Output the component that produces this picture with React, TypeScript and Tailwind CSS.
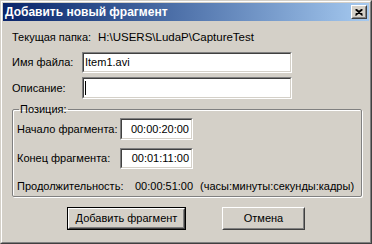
import React from "react";

function Sunken({ className, children }: { className: string; children?: React.ReactNode }) {
  return (
    <div className={`border border-t-[#808080] border-l-[#808080] border-r-white border-b-white ${className}`}>
      <div className="h-full border border-t-[#404040] border-l-[#404040] border-r-[#d4d0c8] border-b-[#d4d0c8] bg-white flex items-center">
        {children}
      </div>
    </div>
  );
}

function Button({ label, width, isDefault }: { label: string; width: string; isDefault?: boolean }) {
  const inner = (
    <div className="h-full border border-t-white border-l-white border-r-[#404040] border-b-[#404040]">
      <div className="h-full border border-t-[#d4d0c8] border-l-[#d4d0c8] border-r-[#808080] border-b-[#808080] flex items-center justify-center">
        {label}
      </div>
    </div>
  );
  return (
    <div className={`${width} h-[23px] ${isDefault ? "border border-black" : ""}`}>
      {inner}
    </div>
  );
}

export default function App() {
  return (
    <div className="w-[372px] h-[244px] bg-[#d4d0c8] border border-t-[#d4d0c8] border-l-[#d4d0c8] border-r-[#404040] border-b-[#404040] font-['Liberation_Sans',Arial,sans-serif] text-[11px] text-black">
      <div className="h-full border border-t-white border-l-white border-r-[#808080] border-b-[#808080] p-px flex flex-col">
        <div className="h-[18px] flex items-center bg-gradient-to-r from-[#0a246a] to-[#a6caf0] pl-[2px] pr-[2px]">
          <span className="text-white font-bold text-[12px] leading-none">Добавить новый фрагмент</span>
          <div className="ml-auto w-[16px] h-[14px] border border-t-white border-l-white border-r-[#404040] border-b-[#404040]">
            <div className="h-full border border-t-[#d4d0c8] border-l-[#d4d0c8] border-r-[#808080] border-b-[#808080] bg-[#d4d0c8] flex items-center justify-center">
              <svg width="8" height="7" viewBox="0 0 8 7">
                <path d="M0.5 0.5 L7.5 6.5 M1.5 0.5 L7.5 5.5 M7.5 0.5 L0.5 6.5 M6.5 0.5 L0.5 5.5" stroke="#000" strokeWidth="1.2" fill="none" />
              </svg>
            </div>
          </div>
        </div>

        <div className="pl-[9px] flex flex-col">
          <div className="mt-[9px] h-[14px] leading-[14px] flex items-baseline whitespace-nowrap">
            <span className="w-[86px] shrink-0">Текущая папка:</span>
            <span className="text-[11.5px]">H:\USERS\LudaP\CaptureTest</span>
          </div>

          <div className="mt-[8px] flex items-center">
            <span className="w-[70px]">Имя файла:</span>
            <Sunken className="w-[210px] h-[21px]">
              <span className="pl-[1px]">Item1.avi</span>
            </Sunken>
          </div>

          <div className="mt-[4px] flex items-center">
            <span className="w-[70px]">Описание:</span>
            <Sunken className="w-[210px] h-[22px]">
              <span className="ml-[1px] w-px h-[14px] bg-black" />
            </Sunken>
          </div>

          <fieldset className="mt-[3px] w-[350px] border border-[#808080] shadow-[inset_1px_1px_0_#fff,1px_1px_0_#fff] rounded-[2px] pl-[4px] pb-[3px]">
            <legend className="ml-[2px] px-px leading-[14px]">Позиция:</legend>
            <div className="mt-[2px] flex items-center">
              <span className="w-[103px]">Начало фрагмента:</span>
              <Sunken className="w-[73px] h-[22px]">
                <span className="ml-auto pr-[2px]">00:00:20:00</span>
              </Sunken>
            </div>
            <div className="mt-[8px] flex items-center">
              <span className="w-[103px]">Конец фрагмента:</span>
              <Sunken className="w-[73px] h-[21px]">
                <span className="ml-auto pr-[2px]">00:01:11:00</span>
              </Sunken>
            </div>
            <div className="mt-[10px] h-[14px] leading-[14px] flex">
              <span className="w-[118px]">Продолжительность:</span>
              <span className="w-[65px]">00:00:51:00</span>
              <span>(часы:минуты:секунды:кадры)</span>
            </div>
          </fieldset>
        </div>

        <div className="mt-[10px] flex justify-center gap-[36px]">
          <Button label="Добавить фрагмент" width="w-[119px]" isDefault />
          <Button label="Отмена" width="w-[83px]" />
        </div>
      </div>
    </div>
  );
}
